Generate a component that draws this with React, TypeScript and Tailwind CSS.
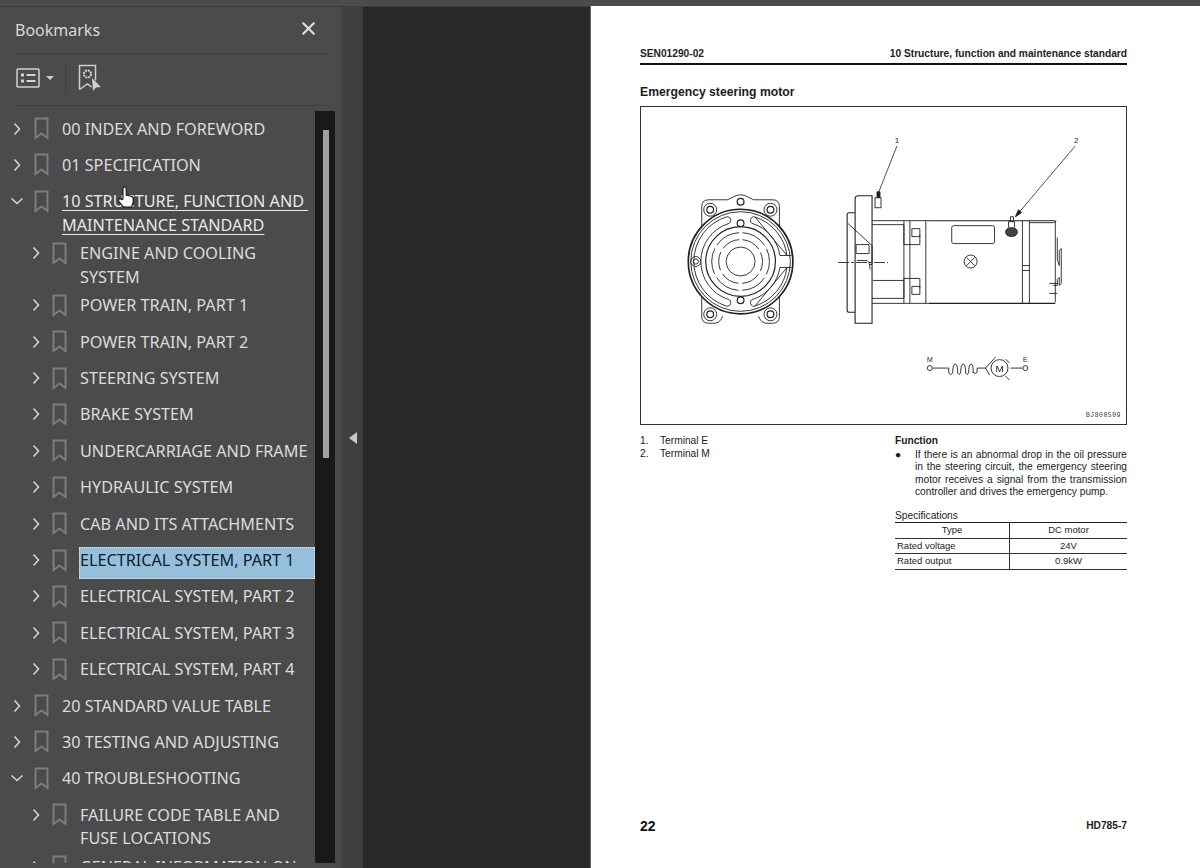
import { X } from 'lucide-react';

type Mark = { title: string; level: number; open?: boolean; tall?: boolean; active?: boolean; selected?: boolean };

const marks: Mark[] = [
  { title: '00 INDEX AND FOREWORD', level: 0 },
  { title: '01 SPECIFICATION', level: 0 },
  { title: '10 STRUCTURE, FUNCTION AND\u00a0 MAINTENANCE STANDARD', level: 0, open: true, tall: true, active: true },
  { title: 'ENGINE AND COOLING SYSTEM', level: 1, tall: true },
  { title: 'POWER TRAIN, PART 1', level: 1 },
  { title: 'POWER TRAIN, PART 2', level: 1 },
  { title: 'STEERING SYSTEM', level: 1 },
  { title: 'BRAKE SYSTEM', level: 1 },
  { title: 'UNDERCARRIAGE AND FRAME', level: 1 },
  { title: 'HYDRAULIC SYSTEM', level: 1 },
  { title: 'CAB AND ITS ATTACHMENTS', level: 1 },
  { title: 'ELECTRICAL SYSTEM, PART 1', level: 1, selected: true },
  { title: 'ELECTRICAL SYSTEM, PART 2', level: 1 },
  { title: 'ELECTRICAL SYSTEM, PART 3', level: 1 },
  { title: 'ELECTRICAL SYSTEM, PART 4', level: 1 },
  { title: '20 STANDARD VALUE TABLE', level: 0 },
  { title: '30 TESTING AND ADJUSTING', level: 0 },
  { title: '40 TROUBLESHOOTING', level: 0, open: true },
  { title: 'FAILURE CODE TABLE AND FUSE LOCATIONS', level: 1, tall: true },
  { title: 'GENERAL INFORMATION ON TROUBLESHOOTING', level: 1, tall: true },
];

const Chevron = ({ open }: { open?: boolean }) => (
  <svg width="14" height="14" viewBox="0 0 14 14" fill="none" stroke="#d4d4d4" strokeWidth="1.6" className="shrink-0">
    {open ? <path d="M1.5 4.5 7 9.5l5.5-5" /> : <path d="M4.5 1.5 9.5 7l-5 5.5" />}
  </svg>
);

const BookmarkIcon = () => (
  <svg width="15" height="23" viewBox="0 0 15 23" fill="none" stroke="#7d7d7d" strokeWidth="2" className="shrink-0">
    <path d="M1.5 1.5h12v19.5l-6-4.5-6 4.5z" />
  </svg>
);

const Row = ({ mark }: { mark: Mark }) => (
  <div className={`flex items-start shrink-0 ${mark.tall ? 'h-[52px]' : 'h-[36.4px]'} ${mark.level === 1 ? 'pl-[29px]' : 'pl-[10px]'}`}>
    <div className="w-[14px] h-[23px] mt-[6px] flex items-center justify-center">
      <Chevron open={mark.open} />
    </div>
    <div className={`mt-[6px] ${mark.level === 1 ? 'ml-[9px]' : 'ml-[10px]'}`}>
      <BookmarkIcon />
    </div>
    {mark.selected ? (
      <div className="ml-[12px] mt-[4px] w-[236px] h-[32px] pt-[1px] bg-[#95bfdb] border border-dotted border-[#dfe9f0] text-[#10202c] leading-[23.4px]">
        {mark.title}
      </div>
    ) : (
      <div className={`ml-[13px] mt-[6.5px] leading-[23.4px] ${mark.level === 1 ? 'w-[234px]' : 'w-[250px]'} ${mark.active ? 'underline underline-offset-[3px] text-[#e8e8e8]' : ''}`}>
        {mark.title}
      </div>
    )}
  </div>
);

const MotorDrawing = () => (
  <svg viewBox="640 106 487 318" className="w-full h-full blur-[0.35px]" fill="none" stroke="#222" strokeWidth="0.9">
    {/* front view */}
    <path d="M701 226V206q0-7 7-7h19l6-3q7-4 14 0l6 3h19q7 0 7 7v20M701 296v20q0 7 7 7h6q5 0 8-7M779 296v20q0 7-7 7h-6q-5 0-8-7" />
    <circle cx="740" cy="261" r="52.5" strokeWidth="1.7" />
    <circle cx="740" cy="261" r="50" />
    <circle cx="740" cy="261" r="35" strokeWidth="1.2" />
    <circle cx="740" cy="261" r="29" strokeDasharray="26.4 4" strokeDashoffset="-2" transform="rotate(-90 740 261)" />
    <circle cx="740" cy="261" r="22" strokeDasharray="19 4" strokeDashoffset="-2" transform="rotate(-90 740 261)" />
    <circle cx="740" cy="261" r="14.5" />
    <path d="M725.5 216.3A47 47 0 0 0 725.5 305.7a3.5 3.5 0 0 0 2.1-6.7A40 40 0 0 1 727.6 223a3.5 3.5 0 0 0-2.1-6.7z" />
    <path d="M754.5 216.3A47 47 0 0 1 786.6 255l4.5 0M786.6 255h-7.1A40 40 0 0 0 752.4 223a3.5 3.5 0 0 1 2.1-6.7z" />
    <path d="M754.5 305.7A47 47 0 0 0 786.6 267l4.5 0M786.6 267h-7.1A40 40 0 0 1 752.4 299a3.5 3.5 0 0 0 2.1 6.7z" />
    {[[709.5, 209], [770, 209], [709.5, 314], [770, 314]].map(([x, y]) => (
      <g key={`${x}-${y}`}>
        <circle cx={x} cy={y} r="6.5" />
        <circle cx={x} cy={y} r="3.4" strokeWidth="1.2" />
      </g>
    ))}
    <circle cx="740" cy="201" r="3.4" strokeWidth="1.2" />
    <circle cx="740" cy="222.5" r="3.4" strokeWidth="1.2" />
    <circle cx="740" cy="300" r="3.4" strokeWidth="1.2" />
    <circle cx="695" cy="261" r="5" />
    <circle cx="695" cy="261" r="2.6" />

    {/* side view */}
    <path d="M855 198q0-3 3-3h14v128h-17zM855 212h-6q-2 0-2 2v96q0 2 2 2h6" strokeWidth="1.1" />
    <path d="M848 223l24 22v19h-3M856 244h13v9h-13zM857 260h10q3 2 3 9" />
    <path d="M872 220h57M872 303h57M872 224h32v20h16v-10M872 298h32v-20h16v10M904 220v83M910 220v83M926 220v83M873 280h31" />
    <path d="M912 228h8v8h-8zM912 286h8v8h-8z" />
    <path d="M929 220h127M929 303h127" strokeWidth="1.1" />
    <path d="M1023 220v83M1030 220v83M1023 265h7M1023 270h7M1056 220v82M1030 222h24q2 0 3-2" />
    <path d="M1058 237v22l2 6v-15l2-2v35l-2 2v-8l-2 2v6h-4M1050 283h9M1050 293h8" />
    <rect x="952" y="225" width="43" height="18" rx="2" />
    <circle cx="971" cy="261" r="6.5" />
    <path d="M967 257l8 8M975 257l-8 8" />
    <path d="M1006 232q0-5 6-5t6 5q-1 4-6 4t-6-4z" fill="#444" />
    <path d="M1009 227v-6h6v6M1011 221v-5h3v5" />
    <rect x="875" y="197" width="6" height="10" />
    <path d="M877 197v-6h3v6" fill="#222" />
    <path d="M838 262h50" strokeDasharray="11 2 3 2" />

    {/* leaders */}
    <path d="M878 193 897 145M1016 216l60-71" strokeWidth="0.8" />
    <path d="M1016 216l3-7 3 3z" fill="#222" />
    <text x="897" y="142" fontFamily="Liberation Sans" fontSize="8" fill="#222" stroke="none" textAnchor="middle">1</text>
    <text x="1077" y="142" fontFamily="Liberation Sans" fontSize="8" fill="#222" stroke="none" textAnchor="middle">2</text>

    {/* circuit symbol */}
    <circle cx="930" cy="368" r="2.5" />
    <circle cx="1026" cy="368" r="2.5" />
    <path d="M933 368h16v5q2 3 4 0 0-9 2.5-9t2.5 9q1 3 3 0 0-9 2.5-9t2.5 9q1 3 3 0 0-9 2.5-9t2 9v-1q2 3 4 0v-4h9M1011 368h12" />
    <circle cx="1000" cy="368" r="8.5" />
    <path d="M990 375l-4-7 10-11M1006 376l4 4M1006 359l4 4" />
    <text x="1000" y="372" fontFamily="Liberation Sans" fontSize="10" fill="#222" stroke="none" textAnchor="middle">M</text>
    <text x="930" y="362" fontFamily="Liberation Sans" fontSize="7" fill="#222" stroke="none" textAnchor="middle">M</text>
    <text x="1026" y="362" fontFamily="Liberation Sans" fontSize="7" fill="#222" stroke="none" textAnchor="middle">E</text>

    <text x="1122" y="417" fontFamily="Liberation Mono" fontSize="6.5" letterSpacing="0.5" fill="#333" stroke="none" textAnchor="end">BJ800509</text>
  </svg>
);

const specRows = [
  ['Type', 'DC motor'],
  ['Rated voltage', '24V'],
  ['Rated output', '0.9kW'],
];

export default function App() {
  return (
    <div className="w-[1200px] h-[868px] flex flex-col overflow-hidden bg-[#282828]">
      <div className="h-[7px] shrink-0 bg-[#4c4c4c] border-b border-[#3c3c3c]" />

      <div className="flex flex-1 min-h-0">
        {/* bookmarks panel */}
        <aside className="w-[341px] shrink-0 flex flex-col bg-[#4b4b4b] text-[#dcdcdc] font-['Noto_Sans',sans-serif] text-[16.2px]">
          <div className="mx-[14px] w-[312px] h-[47px] shrink-0 flex items-center justify-between border-b border-[#3e3e3e]">
            <span className="pl-[1px] text-[16px] text-[#d8d8d8]">Bookmarks</span>
            <X size={21} strokeWidth={2.6} color="#dadada" className="mr-[7px] mb-[3px]" />
          </div>
          <div className="mx-[14px] w-[312px] h-[52px] pb-[4px] shrink-0 flex items-center border-b border-[#3e3e3e]">
            <svg width="25" height="20" viewBox="0 0 25 20" fill="none" stroke="#d2d2d2" strokeWidth="1.5" className="ml-[2px]">
              <rect x="1" y="1" width="22" height="18" rx="1" />
              <rect x="5" y="5.5" width="3" height="3" fill="#d2d2d2" stroke="none" />
              <rect x="5" y="11.5" width="3" height="3" fill="#d2d2d2" stroke="none" />
              <path d="M10.5 7h9M10.5 13h9" strokeWidth="2" />
            </svg>
            <div className="ml-[5px] w-0 h-0 border-x-[4px] border-x-transparent border-t-[4px] border-t-[#cfcfcf]" />
            <div className="ml-[11px] w-px h-[32px] bg-[#3e3e3e]" />
            <svg width="25" height="28" viewBox="0 0 25 28" fill="none" stroke="#cfcfcf" strokeWidth="1.5" className="ml-[12px]">
              <path d="M1.5 25.5V1.5h16v15M1.5 25.5l8-5.5 4 3" />
              <circle cx="9.5" cy="10" r="3.6" strokeWidth="2" strokeDasharray="2 0.8" />
              <path d="M14 14l9 9-5 .5-3 3.5z" fill="#cfcfcf" stroke="none" />
            </svg>
          </div>

          <div className="flex flex-1 min-h-0 mt-[5px] mb-[5px] relative">
            <div className="w-[315px] shrink-0 overflow-hidden flex flex-col">
              {marks.map((mark) => (
                <Row key={mark.title} mark={mark} />
              ))}
            </div>
            <div className="w-[20px] shrink-0 bg-[#191919] pl-[8px] pt-[19px]">
              <div className="w-[6px] h-[328px] bg-[#a0a0a0]" />
            </div>
            {/* hand cursor */}
            <svg width="18" height="22" viewBox="0 0 18 22" className="absolute left-[117px] top-[75px]" stroke="#111" strokeWidth="1.1" fill="#fff">
              <path d="M6 13V3q0-2 1.6-2T9.2 3v6l5 1.2q2 .5 2 2.5V16l-1.6 5H6.5L2 15.5q-1-1.5 0-2.5t2.5.5z" />
            </svg>
          </div>
        </aside>

        {/* collapse strip */}
        <div className="w-[22px] shrink-0 bg-[#3f3f3f] flex items-center justify-center border-l border-[#444]">
          <div className="w-0 h-0 mt-[1px] border-y-[6px] border-y-transparent border-r-[8px] border-r-[#c8c8c8]" />
        </div>

        <div className="w-[227px] shrink-0" />

        {/* pdf page */}
        <main className="w-[610px] shrink-0 -mt-px bg-white border-l border-[#6a6a6a] pl-[49px] pr-[73px] pt-[37px] flex flex-col text-[#1c1c1c] font-['Liberation_Sans',sans-serif] text-[10.2px] leading-[12.5px]">
          <div className="flex justify-between items-end h-[17px] pb-[3px] border-b-2 border-[#111] font-bold text-[#222] box-content">
            <span>SEN01290-02</span>
            <span>10 Structure, function and maintenance standard</span>
          </div>
          <h1 className="mt-[20px] text-[12.2px] font-bold leading-[14px]">Emergency steering motor</h1>
          <div className="mt-[7px] h-[319px] border border-[#333] shrink-0">
            <MotorDrawing />
          </div>

          <div className="mt-[10px] flex">
            <ol className="w-[255px] shrink-0">
              <li className="flex"><span className="w-[20px]">1.</span>Terminal E</li>
              <li className="flex"><span className="w-[20px]">2.</span>Terminal M</li>
            </ol>
            <div className="w-[232px]">
              <div className="font-bold">Function</div>
              <div className="flex mt-px">
                <span className="w-[20px] shrink-0">●</span>
                <p className="text-justify">
                  If there is an abnormal drop in the oil pressure in the steering circuit, the emergency steering motor receives a signal from the transmission controller and drives the emergency pump.
                </p>
              </div>
              <div className="mt-[11px]">Specifications</div>
              <div className="border-t border-[#222] text-[9.5px]">
                {specRows.map(([label, value], i) => (
                  <div key={label} className="flex h-[15.7px] items-center border-b border-[#333]">
                    <span className={`w-[115px] h-full flex items-center border-r border-[#333] ${i === 0 ? 'justify-center' : 'pl-[2px]'}`}>{label}</span>
                    <span className="flex-1 text-center">{value}</span>
                  </div>
                ))}
              </div>
            </div>
          </div>

          <div className="mt-auto mb-[34px] flex justify-between items-center">
            <span className="text-[14px] font-bold leading-[16px] text-[#111]">22</span>
            <span className="font-bold text-[#222]">HD785-7</span>
          </div>
        </main>
      </div>
    </div>
  );
}
